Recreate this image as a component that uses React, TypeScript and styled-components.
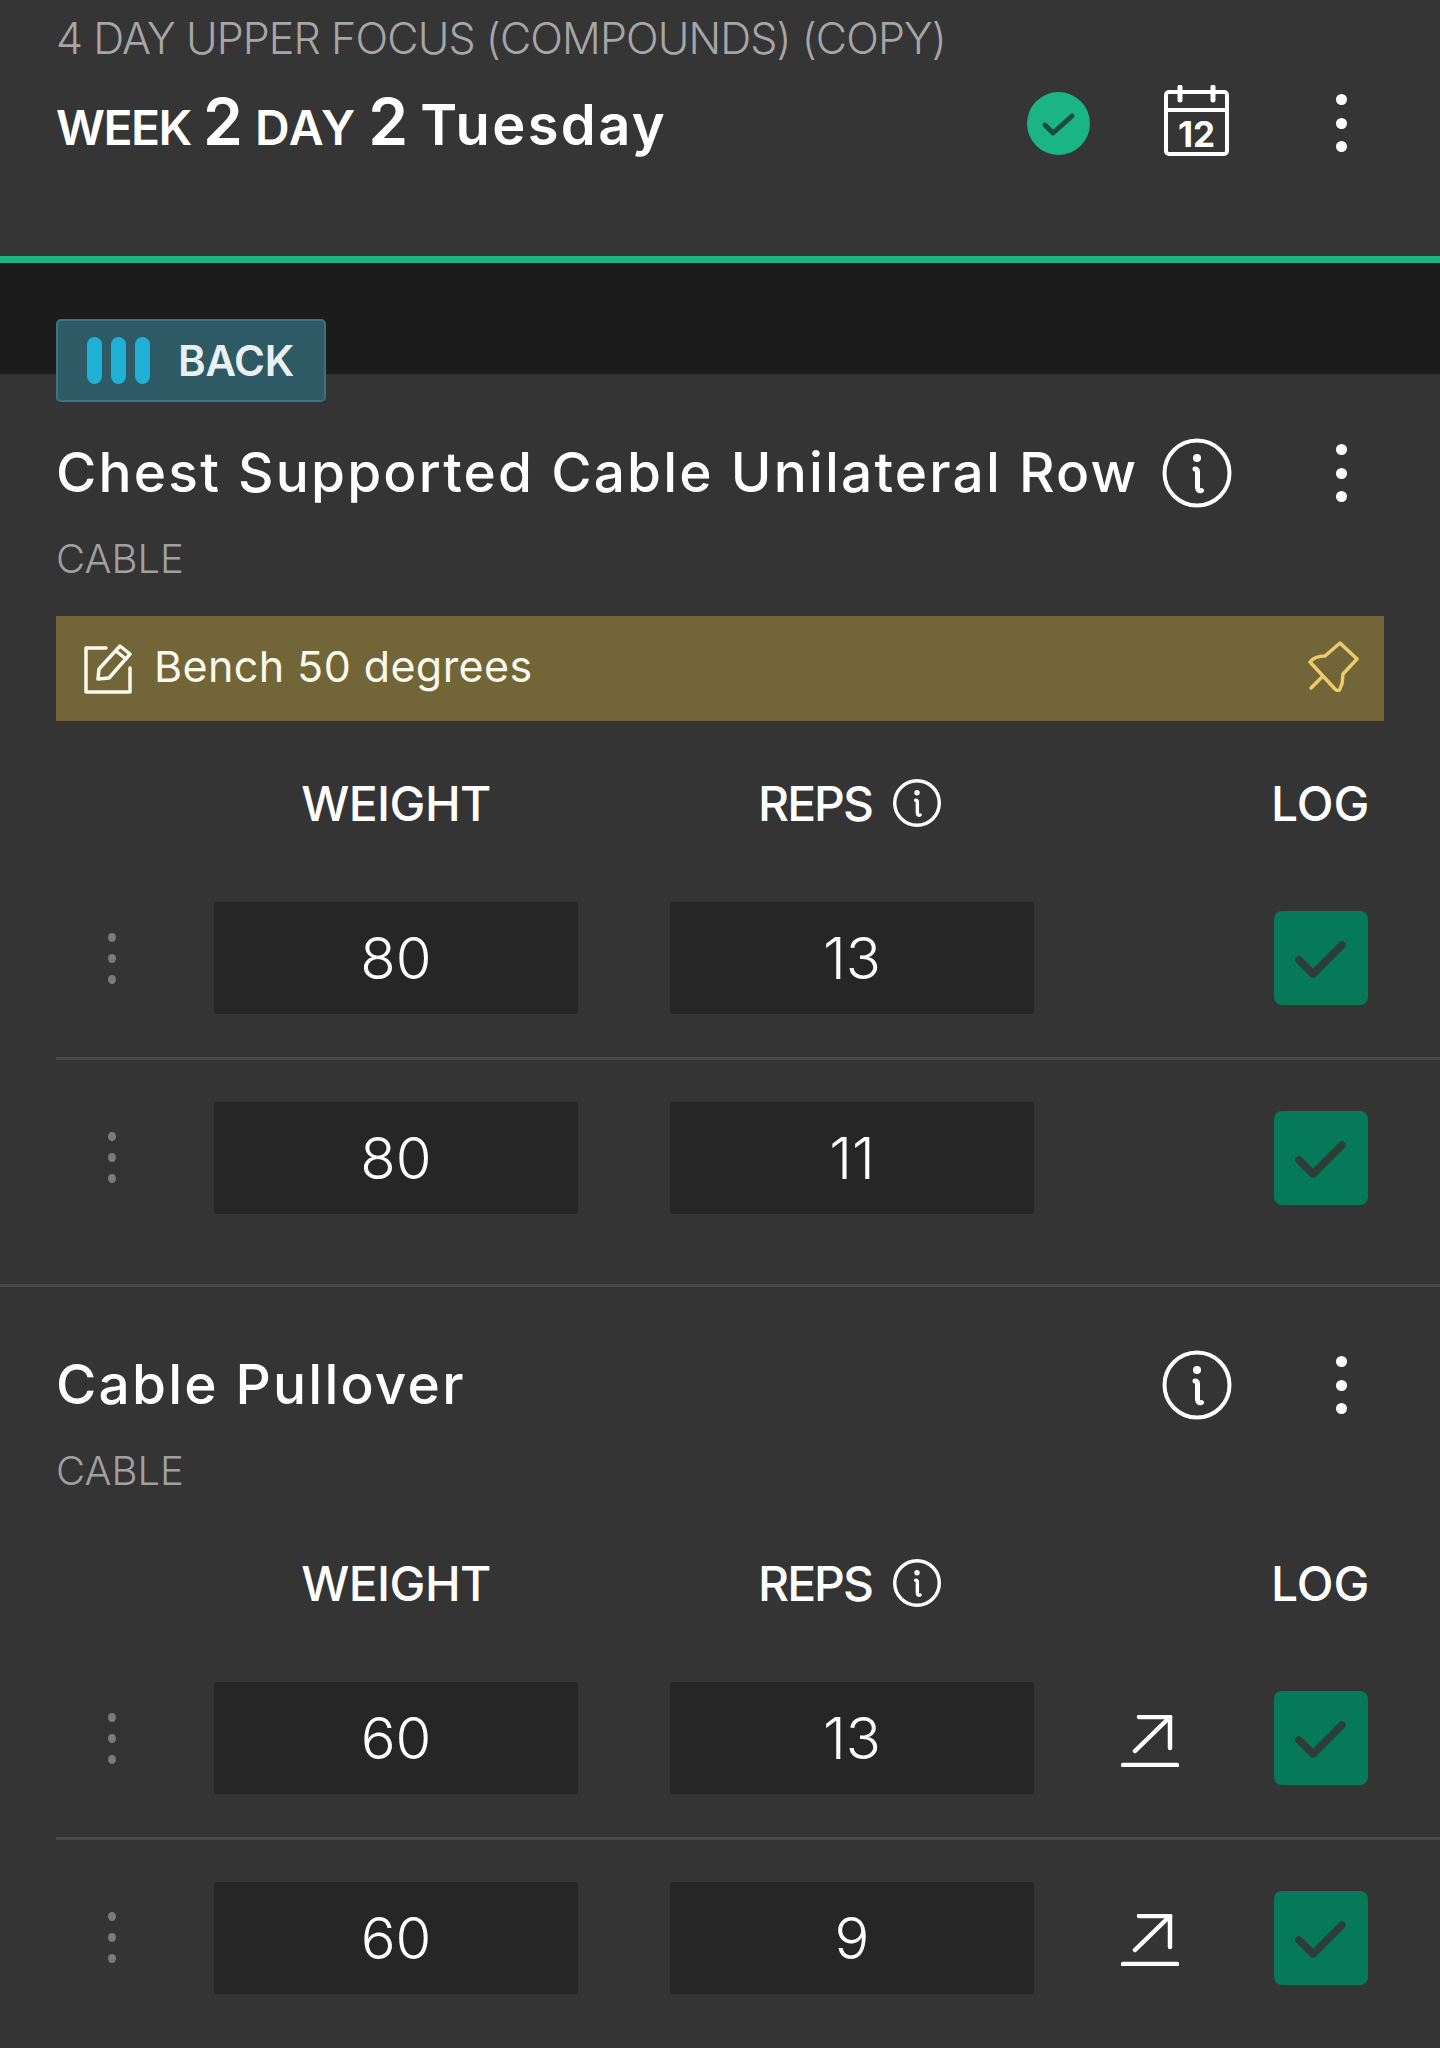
import React from "react";
import styled, { createGlobalStyle } from "styled-components";

const GlobalStyle = createGlobalStyle`
  html, body {
    margin: 0;
    padding: 0;
    background: #343434;
  }
  * {
    box-sizing: border-box;
  }
  body {
    font-family: Inter, "Liberation Sans", sans-serif;
    color: #fff;
  }
`;

function Dots({ muted }: { muted?: boolean }) {
  return (
    <DotsColumn $muted={muted}>
      <i />
      <i />
      <i />
    </DotsColumn>
  );
}

function InfoIcon({ size }: { size: number }) {
  return (
    <svg width={size} height={size} viewBox="0 0 70 70" fill="none" stroke="#fff" strokeLinecap="round">
      <circle cx="35" cy="35" r="32.500" strokeWidth={size > 60 ? 4 : 5} />
      <circle cx="35" cy="20" r="4" fill="#fff" stroke="none" />
      <path d="M33 31c2 0 2.500 1 2.500 3v15c0 3 1.500 4.500 4 3.500" strokeWidth="5" />
    </svg>
  );
}

function CalendarIcon() {
  return (
    <svg width="65" height="71" viewBox="0 0 65 71" fill="none" stroke="#fff" strokeLinecap="round">
      <rect x="2" y="7" width="61" height="62" rx="3" strokeWidth="4" />
      <path d="M2 25h61" strokeWidth="4" />
      <path d="M16 2v13M49 2v13" strokeWidth="5" />
      <text x="32.500" y="62" textAnchor="middle" fill="#fff" stroke="none" fontFamily="Inter, sans-serif" fontSize="35" fontWeight="700">
        12
      </text>
    </svg>
  );
}

function DoneIcon() {
  return (
    <svg width="63" height="63" viewBox="0 0 63 63" fill="none">
      <circle cx="31.500" cy="31.500" r="31.500" fill="#1ab583" />
      <path d="M18 33l8 8 19-17" stroke="#1f4a3c" strokeWidth="5" strokeLinecap="round" strokeLinejoin="round" />
    </svg>
  );
}

function NoteIcon() {
  return (
    <svg width="50" height="50" viewBox="0 0 50 50" fill="none" stroke="#fbf8ec" strokeWidth="3.500" strokeLinecap="round" strokeLinejoin="round">
      <path d="M22 4H2v44h44V24" />
      <path d="M14 35l1-10L36 2l10 8-21 24z" />
      <path d="M32 7l10 8" />
    </svg>
  );
}

function PinIcon() {
  return (
    <PinWrap>
      <svg width="51" height="51" viewBox="0 0 51 51" fill="none" stroke="#ebcb6b" strokeWidth="3.500" strokeLinecap="round" strokeLinejoin="round">
        <path d="M32 2l17 16-14 15c-1 4 1 8-3 15-1 2-3 2-5 0L2 21c3-4 9-6 15-6z" />
        <path d="M14 36L3 47" />
      </svg>
    </PinWrap>
  );
}

function TrendIcon() {
  return (
    <svg width="58" height="52" viewBox="0 0 58 52" fill="none" stroke="#fff" strokeWidth="4.500" strokeLinecap="round" strokeLinejoin="round">
      <path d="M18 2h31v31" />
      <path d="M49 2L14 36" />
      <path d="M2 50h54" />
    </svg>
  );
}

function CheckIcon() {
  return (
    <svg width="94" height="94" viewBox="0 0 94 94" fill="none">
      <path d="M25 49l14 14 29-29" stroke="#2e3d3a" strokeWidth="7.500" strokeLinecap="round" strokeLinejoin="round" />
    </svg>
  );
}

interface SetRowProps {
  weight: number;
  reps: number;
  progress?: boolean;
}

function SetRow({ weight, reps, progress }: SetRowProps) {
  return (
    <Row>
      <HandleCell>
        <Dots muted />
      </HandleCell>
      <ValueBox>{weight}</ValueBox>
      <ValueBox $second>{reps}</ValueBox>
      <ActionCell>{progress && <TrendIcon />}</ActionCell>
      <LogButton>
        <CheckIcon />
      </LogButton>
    </Row>
  );
}

function TableHead() {
  return (
    <HeadRow>
      <span />
      <HeadLabel>WEIGHT</HeadLabel>
      <HeadLabel $second>
        <RepsLabel>REPS</RepsLabel>
        <InfoIcon size={48} />
      </HeadLabel>
      <span />
      <LogLabel>LOG</LogLabel>
    </HeadRow>
  );
}

export default function App() {
  return (
    <Page>
      <GlobalStyle />
      <Header>
        <Subtitle>4 DAY UPPER FOCUS (COMPOUNDS) (COPY)</Subtitle>
        <HeaderRow>
          <WeekTitle>
            <SmallCap>WEEK</SmallCap> <BigNum>2</BigNum> <SmallCap $wide>DAY</SmallCap> <BigNum>2</BigNum> <DayName>Tuesday</DayName>
          </WeekTitle>
          <HeaderIcons>
            <DoneIcon />
            <CalendarSlot>
              <CalendarIcon />
            </CalendarSlot>
            <MoreSlot>
              <Dots />
            </MoreSlot>
          </HeaderIcons>
        </HeaderRow>
      </Header>
      <Band />
      <Exercise>
        <MuscleTag>
          <TagBars>
            <i />
            <i />
            <i />
          </TagBars>
          BACK
        </MuscleTag>
        <TitleRow $first>
          <ExerciseName>Chest Supported Cable Unilateral Row</ExerciseName>
          <TitleIcons>
            <InfoIcon size={70} />
            <MoreSlot $tight>
              <Dots />
            </MoreSlot>
          </TitleIcons>
        </TitleRow>
        <Equipment>CABLE</Equipment>
        <Note>
          <NoteIcon />
          <NoteText>Bench 50 degrees</NoteText>
          <PinIcon />
        </Note>
        <TableHeadWrap $withNote>
          <TableHead />
        </TableHeadWrap>
        <SetRow weight={80} reps={13} />
        <RowDivider />
        <SetRow weight={80} reps={11} />
      </Exercise>
      <Exercise $divided>
        <TitleRow>
          <ExerciseName>Cable Pullover</ExerciseName>
          <TitleIcons>
            <InfoIcon size={70} />
            <MoreSlot $tight>
              <Dots />
            </MoreSlot>
          </TitleIcons>
        </TitleRow>
        <Equipment>CABLE</Equipment>
        <TableHeadWrap>
          <TableHead />
        </TableHeadWrap>
        <SetRow weight={60} reps={13} progress />
        <RowDivider />
        <SetRow weight={60} reps={9} progress />
      </Exercise>
    </Page>
  );
}

const Page = styled.div`
  width: 1440px;
  height: 2048px;
  overflow: hidden;
  background: #343434;
`;

const Header = styled.header`
  height: 263px;
  padding: 0 56px;
  background: #353535;
  border-bottom: 7px solid #1ab583;
`;

const Subtitle = styled.div`
  height: 76px;
  line-height: 76px;
  font-size: 43px;
  font-weight: 300;
  color: #a6a6a6;
  white-space: nowrap;
  letter-spacing: -0.9px;
`;

const HeaderRow = styled.div`
  height: 78px;
  margin-top: 8px;
  display: flex;
  align-items: center;
  justify-content: space-between;
`;

const WeekTitle = styled.div`
  position: relative;
  top: 2px;
  font-size: 48px;
  font-weight: 600;
  white-space: nowrap;
  line-height: 78px;
`;

const SmallCap = styled.span<{ $wide?: boolean }>`
  font-size: 48px;
  letter-spacing: ${(p) => (p.$wide ? "1px" : "-1.5px")};
`;

const BigNum = styled.span`
  font-size: 64px;
`;

const DayName = styled.span`
  font-size: 56px;
  letter-spacing: 2.400px;
`;

const HeaderIcons = styled.div`
  display: flex;
  align-items: center;
`;

const CalendarSlot = styled.div`
  margin-left: 74px;
  margin-bottom: 6px;
  display: flex;
`;

const MoreSlot = styled.div<{ $tight?: boolean }>`
  width: 30px;
  margin-left: ${(p) => (p.$tight ? "94px" : "97px")};
  margin-right: 28px;
  display: flex;
  justify-content: center;
`;

const DotsColumn = styled.div<{ $muted?: boolean }>`
  display: flex;
  flex-direction: column;
  gap: ${(p) => (p.$muted ? "12px" : "12.500px")};

  i {
    display: block;
    width: ${(p) => (p.$muted ? "8px" : "11px")};
    height: ${(p) => (p.$muted ? "9px" : "11px")};
    border-radius: 50%;
    background: ${(p) => (p.$muted ? "#7b7b7b" : "#fff")};
  }
`;

const Band = styled.div`
  height: 111px;
  background: #1c1c1c;
`;

const Exercise = styled.section<{ $divided?: boolean }>`
  padding-left: 56px;
  padding-bottom: ${(p) => (p.$divided ? "0" : "28px")};
  border-top: ${(p) => (p.$divided ? "3px solid #484848" : "none")};
`;

const MuscleTag = styled.div`
  width: 270px;
  height: 83px;
  margin-top: -55px;
  position: relative;
  display: flex;
  align-items: center;
  gap: 28px;
  padding-left: 29px;
  background: #2e5a66;
  border: 2px solid #3a7386;
  border-radius: 5px;
  font-size: 42px;
  font-weight: 600;
  letter-spacing: -0.3px;
  color: #e9f0f2;
`;

const TagBars = styled.div`
  display: flex;
  gap: 9px;

  i {
    display: block;
    width: 15px;
    height: 47px;
    border-radius: 8px;
    background: #1fb0d6;
  }
`;

const TitleRow = styled.div<{ $first?: boolean }>`
  height: 80px;
  margin-top: ${(p) => (p.$first ? "30px" : "57px")};
  padding-right: 56px;
  display: flex;
  align-items: center;
  justify-content: space-between;
`;

const ExerciseName = styled.h2`
  margin: 0;
  font-size: 55px;
  font-weight: 500;
  white-space: nowrap;
  letter-spacing: 2.200px;
`;

const TitleIcons = styled.div`
  margin-top: 2px;
  display: flex;
  align-items: center;
  flex: none;
`;

const Equipment = styled.div`
  height: 50px;
  margin-top: 22px;
  line-height: 50px;
  font-size: 40px;
  font-weight: 300;
  color: #a0a0a0;
`;

const Note = styled.div`
  width: 1328px;
  height: 105px;
  margin-top: 32px;
  padding: 0 25px 0 28px;
  display: flex;
  align-items: center;
  background: #726537;
`;

const NoteText = styled.div`
  flex: 1;
  margin-left: 20px;
  padding-bottom: 5px;
  font-size: 43px;
  font-weight: 400;
  letter-spacing: 0.4px;
  color: #fbf8ec;
`;

const PinWrap = styled.div`
  margin-bottom: 4px;
  display: flex;
`;

const TableHeadWrap = styled.div<{ $withNote?: boolean }>`
  margin-top: ${(p) => (p.$withNote ? "52px" : "57px")};
  margin-bottom: 27px;
`;

const gridColumns = "158px 364px 456px 240px 94px";

const HeadRow = styled.div`
  height: 60px;
  display: grid;
  grid-template-columns: ${gridColumns};
  align-items: center;
`;

const HeadLabel = styled.div<{ $second?: boolean }>`
  margin-left: ${(p) => (p.$second ? "92px" : "0")};
  padding-right: ${(p) => (p.$second ? "5px" : "0")};
  display: flex;
  align-items: center;
  justify-content: center;
  gap: 21px;
  font-size: 48px;
  font-weight: 500;
  letter-spacing: -0.6px;
`;

const RepsLabel = styled.span`
  letter-spacing: -2px;
`;

const LogLabel = styled.div`
  margin-left: -3px;
  font-size: 48px;
  font-weight: 500;
  white-space: nowrap;
`;

const Row = styled.div`
  height: 196.500px;
  display: grid;
  grid-template-columns: ${gridColumns};
  align-items: center;
`;

const HandleCell = styled.div`
  padding-left: 52px;
`;

const ValueBox = styled.div<{ $second?: boolean }>`
  width: 364px;
  height: 112px;
  margin-left: ${(p) => (p.$second ? "92px" : "0")};
  display: flex;
  align-items: center;
  justify-content: center;
  background: #262626;
  font-size: 58px;
  font-weight: 300;
  border-radius: 2px;
`;

const ActionCell = styled.div`
  margin-top: 5px;
  padding-left: 87px;
  display: flex;
`;

const LogButton = styled.div`
  width: 94px;
  height: 94px;
  background: #067a58;
  border-radius: 8px;
`;

const RowDivider = styled.div`
  height: 3px;
  background: #484848;
`;
